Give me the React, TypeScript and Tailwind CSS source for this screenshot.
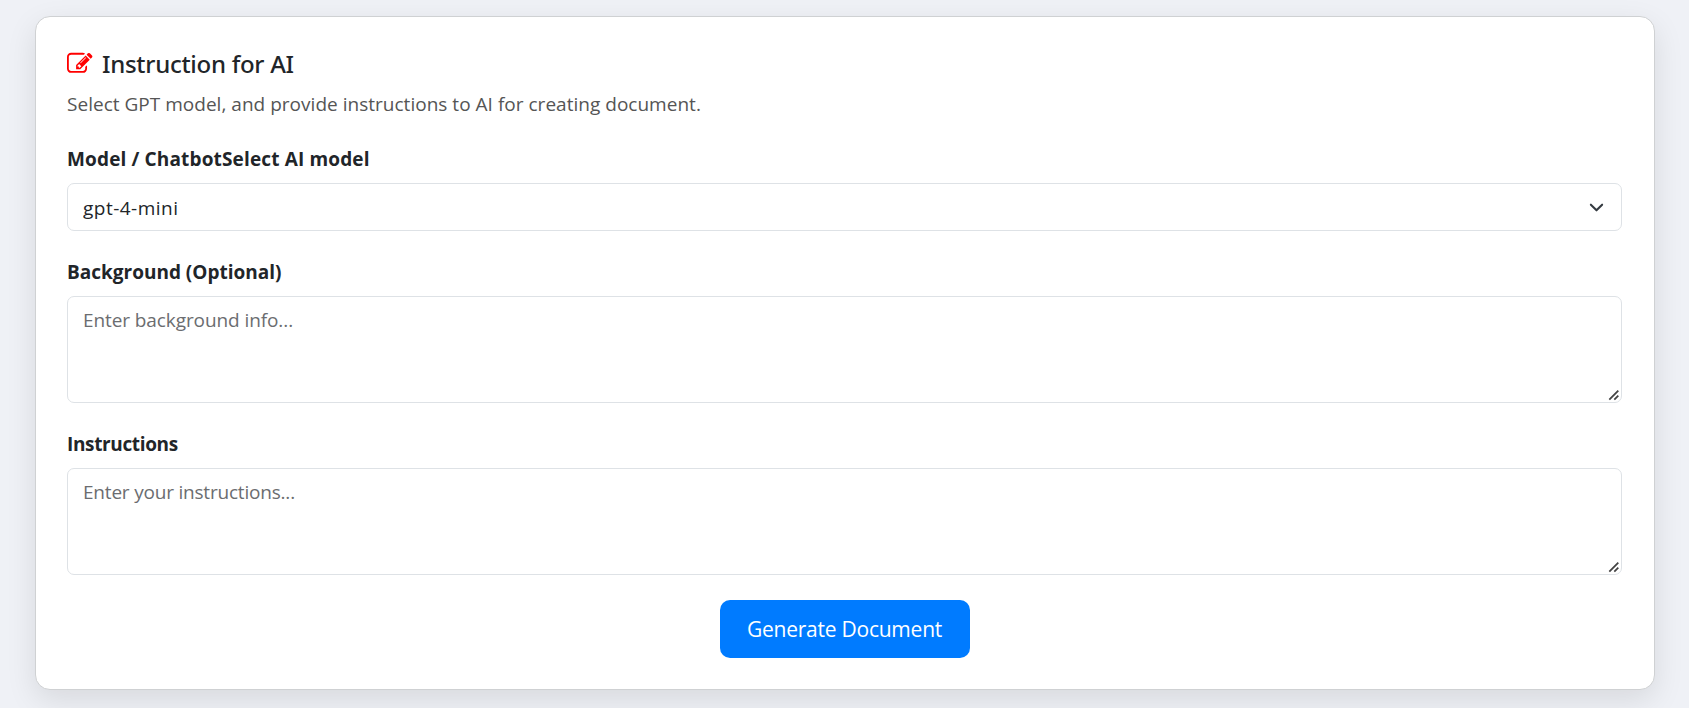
import React from "react";

const field =
  "w-full rounded-[7px] border border-[#dee2e6] bg-white px-[15px] text-[19px] leading-[30px]";
const label = "block h-[30px] text-[19px] font-bold leading-[32px] text-[#212529]";

function EditIcon() {
  return (
    <svg viewBox="0 0 1792 1792" className="mt-px h-[25.5px] w-[25.5px] shrink-0 fill-[#ff0000]" aria-hidden="true">
      <path d="M888 1184l116-116-152-152-116 116v56h96v96h56zm440-720q-16-16-33 1l-350 350q-17 17-1 33t33-1l350-350q17-17 1-33zm80 594v190q0 119-84.5 203.5t-203.5 84.5h-832q-119 0-203.5-84.5t-84.5-203.5v-832q0-119 84.5-203.5t203.5-84.5h832q63 0 117 25 15 7 18 23 3 17-9 29l-49 49q-14 14-32 8-23-6-45-6h-832q-66 0-113 47t-47 113v832q0 66 47 113t113 47h832q66 0 113-47t47-113v-126q0-13 9-22l64-64q15-15 35-7t20 29zm-96-738l288 288-672 672h-288v-288zm444 132l-92 92-288-288 92-92q28-28 68-28t68 28l152 152q28 28 28 68t-28 68z" />
    </svg>
  );
}

function ResizeGrip() {
  return (
    <svg
      viewBox="0 0 12 12"
      className="pointer-events-none absolute bottom-[2px] right-[2px] h-3 w-3"
      aria-hidden="true"
    >
      <path d="M1.3 10.7l9-9M6.3 10.7l4-4" fill="none" stroke="#444" strokeWidth="1.8" />
    </svg>
  );
}

export default function App() {
  return (
    <div className="h-[708px] overflow-hidden bg-[#eff1f6] pl-[35px] pr-[34px] pt-4 font-['Open_Sans','Noto_Sans',sans-serif]">
      <main className="h-[674px] rounded-[15px] border border-[#cfd1d3] bg-white pb-[31px] pl-[31px] pr-8 pt-[31px] shadow-[0_10px_30px_rgba(0,0,0,0.1)]">
        <header className="flex flex-col gap-[10px]">
          <h1 className="flex h-[30px] items-center gap-[9.5px] font-['Noto_Sans',sans-serif] text-[24px] font-medium leading-[30px] tracking-[-0.28px] text-[#212529]">
            <EditIcon />
            <span className="pt-[2px]">Instruction for AI</span>
          </h1>
          <p className="h-[30px] text-[19px] leading-[32px] tracking-[0.02px] text-[#555]">
            Select GPT model, and provide instructions to AI for creating document.
          </p>
        </header>

        <form className="mt-[25px] flex flex-col gap-[25px]" onSubmit={(e) => e.preventDefault()}>
          <div className="flex flex-col gap-[10px]">
            <label htmlFor="model" className={`${label} tracking-[0.145px]`}>
              Model / ChatbotSelect AI model
            </label>
            <div className="relative">
              <select
                id="model"
                className={`${field} block h-12 appearance-none pt-[2px] tracking-[0.48px] text-[#212529]`}
              >
                <option>gpt-4-mini</option>
              </select>
              <svg
                viewBox="0 0 16 16"
                className="pointer-events-none absolute right-[18.5px] top-[16.5px] h-[15px] w-[15px]"
                aria-hidden="true"
              >
                <path
                  d="m2 5 6 6 6-6"
                  fill="none"
                  stroke="#343a40"
                  strokeWidth="2.2"
                  strokeLinecap="round"
                  strokeLinejoin="round"
                />
              </svg>
            </div>
          </div>

          <div className="flex flex-col gap-[10px]">
            <label htmlFor="background" className={`${label} tracking-normal`}>
              Background (Optional)
            </label>
            <div className="relative">
              <textarea
                id="background"
                placeholder="Enter background info..."
                className={`${field} block h-[107px] resize-none py-[7.5px] tracking-[-0.09px] placeholder:text-[#6b6d70]`}
              />
              <ResizeGrip />
            </div>
          </div>

          <div className="flex flex-col gap-[10px]">
            <label htmlFor="instructions" className={`${label} tracking-[-0.36px]`}>
              Instructions
            </label>
            <div className="relative">
              <textarea
                id="instructions"
                placeholder="Enter your instructions..."
                className={`${field} block h-[107px] resize-none py-[7.5px] tracking-[-0.2px] placeholder:text-[#6b6d70]`}
              />
              <ResizeGrip />
            </div>
          </div>

          <button
            type="submit"
            className="h-[58px] w-[250px] self-center rounded-[10px] bg-[#007bff] text-[21px] leading-[33px] tracking-[-0.24px] text-white"
          >
            Generate Document
          </button>
        </form>
      </main>
    </div>
  );
}
